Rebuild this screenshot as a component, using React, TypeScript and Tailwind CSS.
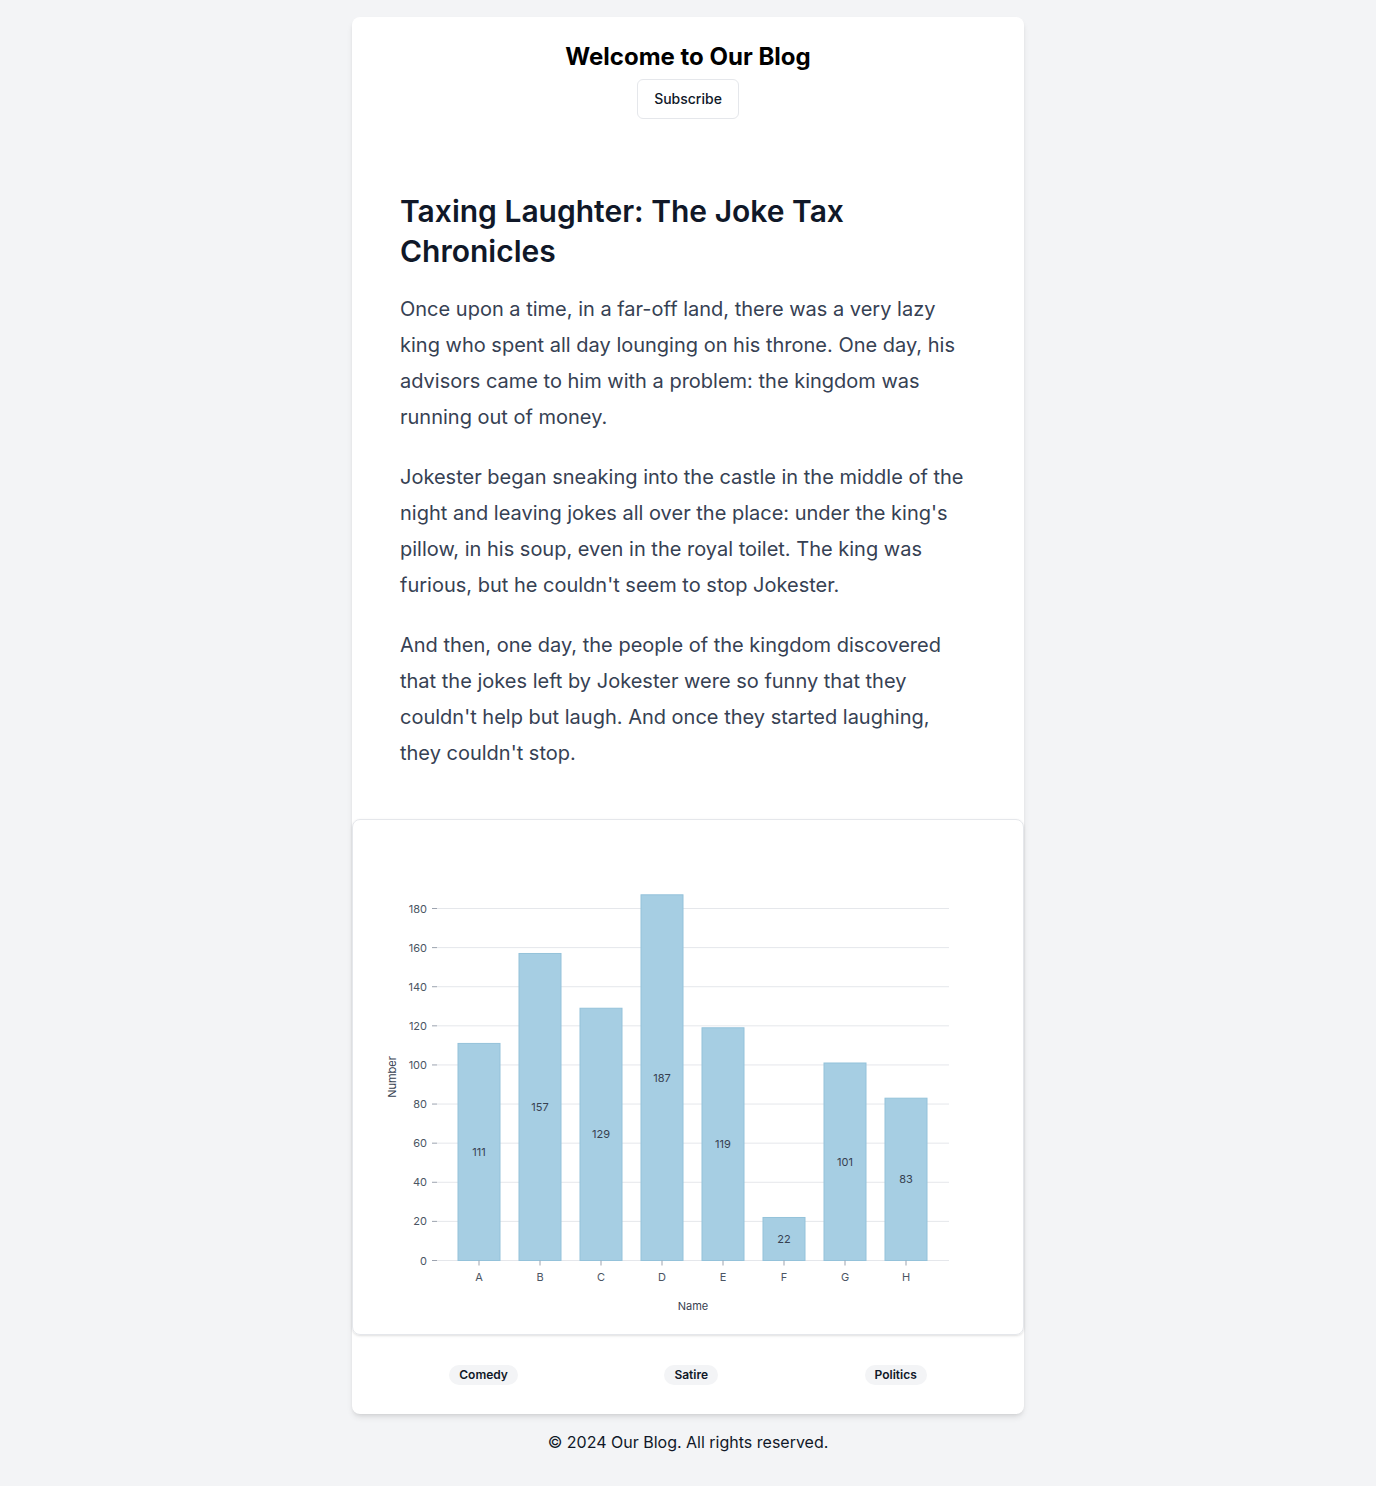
import React from 'react';

const data = [
  { name: 'A', value: 111 },
  { name: 'B', value: 157 },
  { name: 'C', value: 129 },
  { name: 'D', value: 187 },
  { name: 'E', value: 119 },
  { name: 'F', value: 22 },
  { name: 'G', value: 101 },
  { name: 'H', value: 83 },
];

const BASE = 1261.5;
const SCALE = 352 / 180;
const yOf = (v: number) => BASE - v * SCALE;

const BarChart: React.FC = () => {
  const ticks = [0, 20, 40, 60, 80, 100, 120, 140, 160, 180];
  return (
    <svg width={670} height={514} viewBox="353 821 670 514" className="block" style={{ fontFamily: 'Inter, sans-serif' }}>
      {/* grid + y ticks */}
      {ticks.map((t) => (
        <g key={t}>
          <line x1={437} x2={949} y1={yOf(t)} y2={yOf(t)} stroke="#e5e7eb" strokeWidth={1} />
          <line x1={432} x2={437} y1={yOf(t)} y2={yOf(t)} stroke="#9ca3af" strokeWidth={1} />
          <text x={427} y={yOf(t) + 4} textAnchor="end" fontSize={11} fill="#4b5563">
            {t}
          </text>
        </g>
      ))}

      {/* bars */}
      {data.map((d, i) => {
        const cx = 479 + i * 61;
        const top = yOf(d.value);
        return (
          <g key={d.name}>
            <rect x={cx - 21} y={top} width={42} height={BASE - top} fill="#a6cee3" stroke="#94c2da" strokeWidth={1} />
            <text x={cx} y={(top + BASE) / 2 + 4} textAnchor="middle" fontSize={11} fill="#374151">
              {d.value}
            </text>
            <line x1={cx} x2={cx} y1={BASE} y2={BASE + 5} stroke="#9ca3af" strokeWidth={1} />
            <text x={cx} y={1282} textAnchor="middle" fontSize={11} fill="#4b5563">
              {d.name}
            </text>
          </g>
        );
      })}

      {/* axis labels */}
      <text x={396} y={1078} textAnchor="middle" fontSize={11} fill="#374151" transform="rotate(-90 396 1078)">
        Number
      </text>
      <text x={693} y={1311} textAnchor="middle" fontSize={11} fill="#374151">
        Name
      </text>
    </svg>
  );
};

export default function App() {
  const tags = ['Comedy', 'Satire', 'Politics'];

  return (
    <div className="min-h-screen bg-gray-100 flex flex-col items-center pt-[17px]" style={{ fontFamily: 'Inter, sans-serif' }}>
      <div className="w-[672px] bg-white rounded-lg shadow-md">
        {/* Header */}
        <header className="p-6 flex flex-col items-center">
          <h1 className="text-2xl font-bold text-black">Welcome to Our Blog</h1>
          <button className="mt-1.5 h-10 px-4 rounded-md border border-gray-200 bg-white text-sm font-medium text-gray-900">
            Subscribe
          </button>
        </header>

        {/* Article */}
        <article className="pl-12 pr-[50px] pt-12 pb-12">
          <h2 className="text-3xl font-semibold text-gray-900 leading-10">
            Taxing Laughter: The Joke Tax Chronicles
          </h2>
          <p className="mt-5 text-xl leading-9 text-gray-700">
            Once upon a time, in a far-off land, there was a very lazy king who spent all day lounging on his throne. One day,
            his advisors came to him with a problem: the kingdom was running out of money.
          </p>
          <p className="mt-6 text-xl leading-9 text-gray-700">
            Jokester began sneaking into the castle in the middle of the night and leaving jokes all over the place: under the
            king's pillow, in his soup, even in the royal toilet. The king was furious, but he couldn't seem to stop Jokester.
          </p>
          <p className="mt-6 text-xl leading-9 text-gray-700">
            And then, one day, the people of the kingdom discovered that the jokes left by Jokester were so funny that they
            couldn't help but laugh. And once they started laughing, they couldn't stop.
          </p>
        </article>

        {/* Chart */}
        <section className="rounded-lg border border-gray-200 shadow-sm overflow-hidden">
          <BarChart />
        </section>

        {/* Tags */}
        <footer className="h-[79px] px-6 flex items-center justify-around">
          {tags.map((t) => (
            <span key={t} className="rounded-full bg-gray-100 px-2.5 py-0.5 text-xs font-semibold text-gray-900">
              {t}
            </span>
          ))}
        </footer>
      </div>

      <p className="mt-4 text-base text-gray-900">© 2024 Our Blog. All rights reserved.</p>
    </div>
  );
}
